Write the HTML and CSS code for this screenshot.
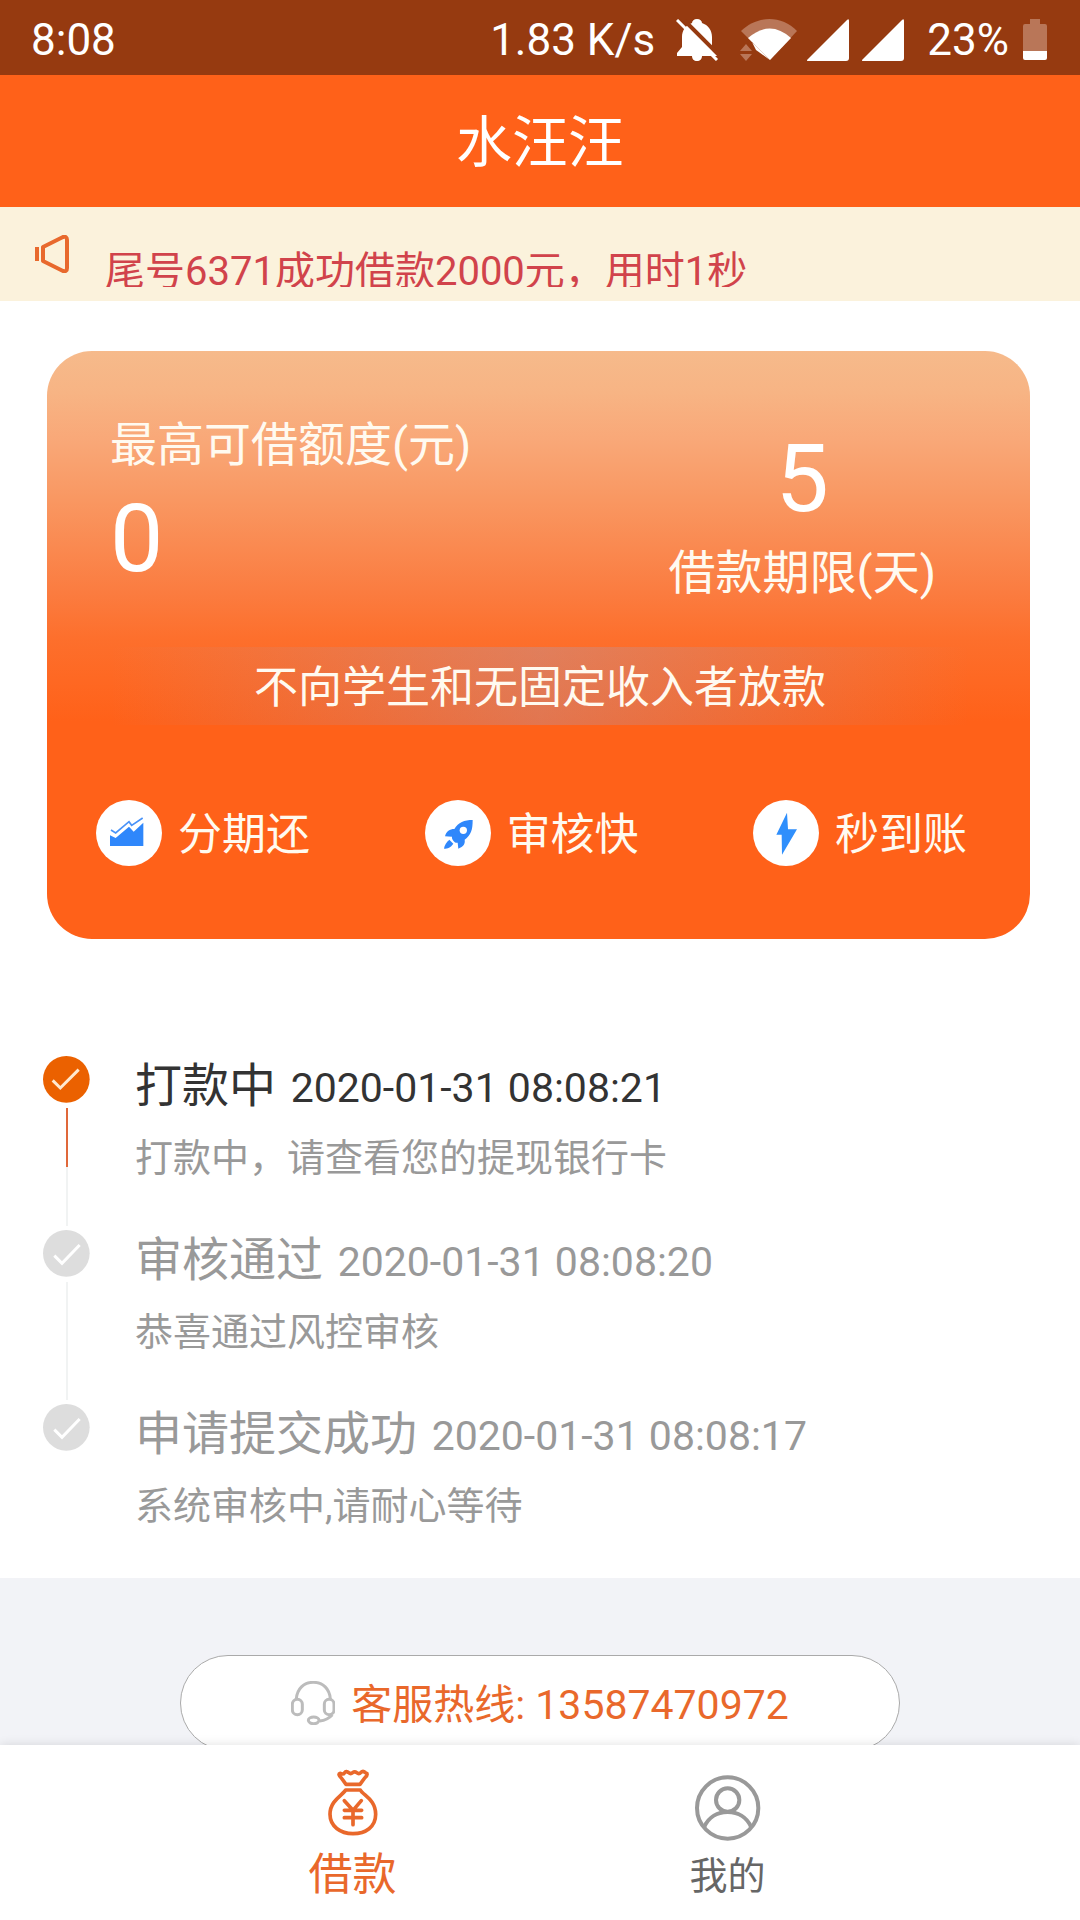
FILE: index.html
```html
<!DOCTYPE html>
<html lang="zh-CN">
<head>
<meta charset="utf-8">
<meta name="viewport" content="width=device-width, initial-scale=1">
<title>水汪汪</title>
<link rel="stylesheet" href="styles.css">
</head>
<body>
<div class="app">
  <div class="status">
    <span class="status-time">8:08</span>
    <span class="status-speed">1.83 K/s</span>
    <svg class="icon-bell" viewBox="0 0 44 42" width="44" height="42" aria-hidden="true">
      <path fill="#fff" d="M21 0c3 0 5 2 5 4 6 2 10 7 10 14v10l6 6v3H1v-3l5-6V18C6 11 10 6 16 4c0-2 2-4 5-4zM16 37h10c0 3-2 5-5 5s-5-2-5-5z"/>
      <path stroke="#963a10" stroke-width="4" d="M5-2l40 40"/>
      <path stroke="#fff" stroke-width="3" d="M1 1l40 40"/>
    </svg>
    <svg class="icon-wifi" viewBox="0 0 58 43" width="58" height="43" aria-hidden="true">
      <path fill="#b97658" d="M1 13C17-3 42-3 57 13L30 42z"/>
      <path fill="#fff" d="M8 20q22-19 43 0L30 42z"/>
      <path fill="#963a10" d="M0 24h12l4 5v13H0z"/>
      <path fill="#fff" d="M12 24l18 18-14-10z"/>
      <path fill="#b97658" d="M0 33l6-7 6 7zM0 36h12l-6 7z"/>
    </svg>
    <svg class="icon-signal" viewBox="0 0 42 42" width="42" height="42" aria-hidden="true"><path fill="#fff" d="M0 41L40 1q2-2 2 1v37q0 3-3 3H2q-3 0-2-1z"/></svg>
    <svg class="icon-signal" viewBox="0 0 42 42" width="42" height="42" aria-hidden="true"><path fill="#fff" d="M0 41L40 1q2-2 2 1v37q0 3-3 3H2q-3 0-2-1z"/></svg>
    <span class="status-battery">23%</span>
    <svg class="icon-battery" viewBox="0 0 24 42" width="24" height="42" aria-hidden="true">
      <path fill="#b97658" d="M7 0h10v5h5q2 0 2 2v26H0V7q0-2 2-2h5z"/>
      <path fill="#fff" d="M0 32h24v7q0 2-2 2H2q-2 0-2-2z"/>
    </svg>
  </div>

  <header class="header"><h1 class="title">水汪汪</h1></header>

  <div class="notice">
    <svg class="notice-icon" viewBox="0 0 34 38" width="34" height="38" aria-hidden="true">
      <path fill="#e8692d" d="M0 12h4v14H0z"/>
      <path fill="none" stroke="#e8692d" stroke-width="4" stroke-linejoin="round" d="M8 12v14l20 10q4 1 4-3V5q0-4-4-3z"/>
    </svg>
    <p class="notice-text">尾号6371成功借款2000元，用时1秒</p>
  </div>

  <main class="content">
    <section class="card">
      <div class="limits">
        <div class="limit">
          <span class="label">最高可借额度(元)</span>
          <strong class="number">0</strong>
        </div>
        <div class="limit term">
          <strong class="number">5</strong>
          <span class="label">借款期限(天)</span>
        </div>
      </div>
      <p class="warning">不向学生和无固定收入者放款</p>
      <ul class="features">
        <li class="feature">
          <svg viewBox="198 180 198 198" width="66" height="66" aria-hidden="true">
            <circle cx="297" cy="279" r="99" fill="#fff"/>
            <path fill="#2f87fb" d="M240 286l17 8 40-34 14 15 29-27v70H240z"/>
            <path fill="none" stroke="#4a93f8" stroke-width="5" d="M243 270l14 9 40-34 8 11 33-22"/>
          </svg>
          <span>分期还</span>
        </li>
        <li class="feature">
          <svg viewBox="1182 180 198 198" width="66" height="66" aria-hidden="true">
            <circle cx="1281" cy="279" r="99" fill="#fff"/>
            <path fill="#2f87fb" d="M1325 240c0 30-5 45-24 59 2 12-3 20-19 27l-2-18c-6 2-10-3-13-6-3-4-5-8-4-12l-21-1c4-15 14-22 28-22 12-20 30-27 55-27z"/>
            <circle cx="1297" cy="271" r="11" fill="#fff"/>
            <path fill="#2f87fb" d="M1255 299l12 12c-8 12-17 15-28 15 1-10 7-19 16-27z"/>
          </svg>
          <span>审核快</span>
        </li>
        <li class="feature">
          <svg viewBox="609 180 198 198" width="66" height="66" aria-hidden="true">
            <circle cx="708" cy="279" r="99" fill="#fff"/>
            <path fill="#2f8ffc" d="M711 218l3 50h27l-45 76-1-60h-16z"/>
          </svg>
          <span>秒到账</span>
        </li>
      </ul>
    </section>

    <ol class="steps">
      <li class="step active">
        <div class="rail">
          <svg viewBox="0 0 141 141" width="47" height="47" aria-hidden="true"><circle class="dot" cx="70" cy="70" r="70"/><path class="tick" d="M29 73l23 23 55-55"/></svg>
          <i class="line"></i>
        </div>
        <div class="step-body">
          <h2 class="step-title">打款中 <time>2020-01-31 08:08:21</time></h2>
          <p class="step-text">打款中，请查看您的提现银行卡</p>
        </div>
      </li>
      <li class="step">
        <div class="rail">
          <svg viewBox="0 0 141 141" width="47" height="47" aria-hidden="true"><circle class="dot" cx="70" cy="70" r="70"/><path class="tick" d="M34 77l23 23 53-55"/></svg>
          <i class="line"></i>
        </div>
        <div class="step-body">
          <h2 class="step-title">审核通过 <time>2020-01-31 08:08:20</time></h2>
          <p class="step-text">恭喜通过风控审核</p>
        </div>
      </li>
      <li class="step">
        <div class="rail">
          <svg viewBox="0 0 141 141" width="47" height="47" aria-hidden="true"><circle class="dot" cx="70" cy="70" r="70"/><path class="tick" d="M34 77l23 23 53-55"/></svg>
        </div>
        <div class="step-body">
          <h2 class="step-title">申请提交成功 <time>2020-01-31 08:08:17</time></h2>
          <p class="step-text">系统审核中,请耐心等待</p>
        </div>
      </li>
    </ol>

    <section class="support">
      <a class="hotline" href="tel:13587470972">
        <svg viewBox="420 153 132 132" width="44" height="44" aria-hidden="true">
          <g fill="none" stroke="#bcbcbc" stroke-width="9">
            <path d="M436 207c2-30 22-50 51-50s49 20 51 50M544 254c-8 9-22 17-38 19"/>
            <rect x="424" y="208" width="30" height="46" rx="15"/>
            <rect x="520" y="208" width="29" height="46" rx="14"/>
            <ellipse cx="488" cy="271" rx="16" ry="10"/>
          </g>
        </svg>
        <span class="hotline-text">客服热线: 13587470972</span>
      </a>
    </section>
  </main>

  <nav class="tabs">
    <a class="tab current" href="#loan">
      <svg viewBox="525 414 156 204" width="52" height="68" aria-hidden="true">
        <g fill="none" stroke="#e9682b" stroke-width="11" stroke-linecap="round" stroke-linejoin="round">
          <path d="M582 460l-14-19q-12-12-3-14 9 4 12-1 6-8 13-1 6 5 12 0 6-5 12 0 7 6 13-1 6-6 12 0 7 4 5 3 4 5-6 14l-14 19z"/>
          <path d="M581 477h44c8 16 46 28 46 73 0 38-30 58-68 58s-69-22-69-58c0-42 38-57 47-73z"/>
          <path d="M577 509l26 29 25-29M577 538h52M577 560h52M603 538v43"/>
        </g>
      </svg>
      <span>借款</span>
    </a>
    <a class="tab" href="#mine">
      <svg viewBox="459 432 201 201" width="67" height="67" aria-hidden="true">
        <g fill="none" stroke="#999" stroke-width="12">
          <circle cx="560" cy="534" r="92"/>
          <circle cx="560" cy="510" r="35"/>
          <path d="M489 592c14-32 42-46 71-46s57 14 71 46"/>
        </g>
      </svg>
      <span>我的</span>
    </a>
  </nav>
</div>
</body>
</html>
```
FILE: styles.css
```css
* {
  box-sizing: border-box;
}

body,
h1,
h2,
p,
ul,
ol {
  margin: 0;
  padding: 0;
  font-weight: 400;
}

body {
  font-family: Roboto, "Noto Sans CJK SC", sans-serif;
  background: #fff;
  color: #333;
}

ul,
ol {
  list-style: none;
}

a {
  color: inherit;
  text-decoration: none;
}

svg {
  display: block;
  flex: none;
}

.app {
  display: flex;
  flex-direction: column;
  height: 100vh;
}

.status {
  flex: none;
  display: flex;
  align-items: center;
  height: 75px;
  padding: 4px 33px 0 31px;
  background: #963a10;
  color: #fff;
  font-size: 44px;
  line-height: 52px;
}

.status-speed {
  margin-left: auto;
}

.icon-bell {
  margin-left: 21px;
}

.icon-wifi {
  margin-left: 20px;
}

.icon-signal {
  margin-left: 9px;
}

.icon-signal + .icon-signal {
  margin-left: 13px;
}

.status-battery {
  margin-left: 23px;
}

.icon-battery {
  margin-left: 14px;
}

.header {
  flex: none;
  display: flex;
  align-items: center;
  justify-content: center;
  height: 132px;
  padding-top: 4px;
  background: #ff6119;
  color: #fff;
}

.title {
  font-size: 56px;
  line-height: 64px;
}

.notice {
  flex: none;
  display: flex;
  height: 94px;
  padding: 28px 35px 0;
  background: #fbf2dc;
  color: #d1434b;
}

.notice-text {
  height: 52px;
  margin-left: 36px;
  overflow: hidden;
  font-size: 40px;
  line-height: 74px;
}

.content {
  flex: 1;
  min-height: 0;
  overflow: auto;
  scrollbar-width: none;
}

.card {
  display: flex;
  flex-direction: column;
  margin: 50px 50px 0 47px;
  padding: 64px 0 73px;
  border-radius: 45px;
  background: linear-gradient(#f6ba8b 0%, #f7b484 7%, #f9a878 15%, #f99660 26%, #fb7c40 41%, #fd6f2c 49%, #ff6119 63%);
  color: #fffaf0;
}

.limits {
  display: flex;
  justify-content: space-between;
  padding: 0 94px 0 63px;
}

.limit {
  display: flex;
  flex-direction: column;
}

.term {
  align-items: center;
}

.label {
  font-size: 47px;
  line-height: 60px;
}

.number {
  color: #fff;
  font-size: 95px;
  font-weight: 400;
  line-height: 128px;
}

.warning {
  margin: 44px 60px 75px 63px;
  padding-top: 4px;
  background: linear-gradient(90deg, rgba(158, 166, 207, 0), rgba(158, 166, 207, 0.3) 50%, rgba(158, 166, 207, 0));
  font-size: 44px;
  line-height: 74px;
  text-align: center;
}

.features {
  display: flex;
  justify-content: space-between;
  padding: 0 63px 0 49px;
}

.feature {
  display: flex;
  align-items: center;
  gap: 16px;
  font-size: 44px;
  line-height: 62px;
}

.feature span {
  padding-top: 4px;
}

.steps {
  padding: 117px 43px 0;
}

.step {
  display: flex;
  gap: 45px;
  min-height: 174px;
  color: #999;
}

.rail {
  display: flex;
  flex-direction: column;
  align-items: center;
  gap: 5px;
  padding-bottom: 4px;
}

.line {
  flex: 1;
  width: 2px;
  background: #f1f3f3;
}

.active .line {
  background: linear-gradient(#e0683a 50%, #f1f3f3 50%);
}

.dot {
  fill: #ddd;
}

.active .dot {
  fill: #eb6100;
}

.tick {
  fill: none;
  stroke: #fff;
  stroke-width: 9;
}

.active .tick {
  stroke: #ffe9cf;
}

.step-title {
  font-size: 47px;
  line-height: 60px;
}

.step-title time {
  margin-left: 3px;
  font-size: 41px;
}

.active .step-title {
  color: #333;
}

.step-text {
  margin-top: 10px;
  font-size: 38px;
  line-height: 60px;
}

.support {
  padding: 77px 0;
  background: #f2f3f7;
}

.hotline {
  display: flex;
  align-items: center;
  justify-content: center;
  gap: 16px;
  width: calc(100% / 3 * 2);
  height: 96px;
  margin: 0 auto;
  border: 1px solid #aaa;
  border-radius: 48px;
  background: #fff;
  color: #e9682b;
  font-size: 41px;
}

.hotline-text {
  padding-bottom: 4px;
}

.tabs {
  flex: none;
  display: grid;
  grid-template-columns: 1fr 1fr;
  align-items: center;
  height: 175px;
  padding: 4px 165px 0;
  background: #fff;
  box-shadow: 0 0 10px rgba(0, 0, 0, 0.12);
  z-index: 1;
}

.tab {
  display: flex;
  flex-direction: column;
  align-items: center;
  gap: 12px;
  padding-top: 3px;
  color: #666;
  font-size: 38px;
  line-height: 46px;
}

.tab.current {
  padding-top: 0;
  color: #e9682b;
  font-size: 44px;
  line-height: 52px;
}
```
